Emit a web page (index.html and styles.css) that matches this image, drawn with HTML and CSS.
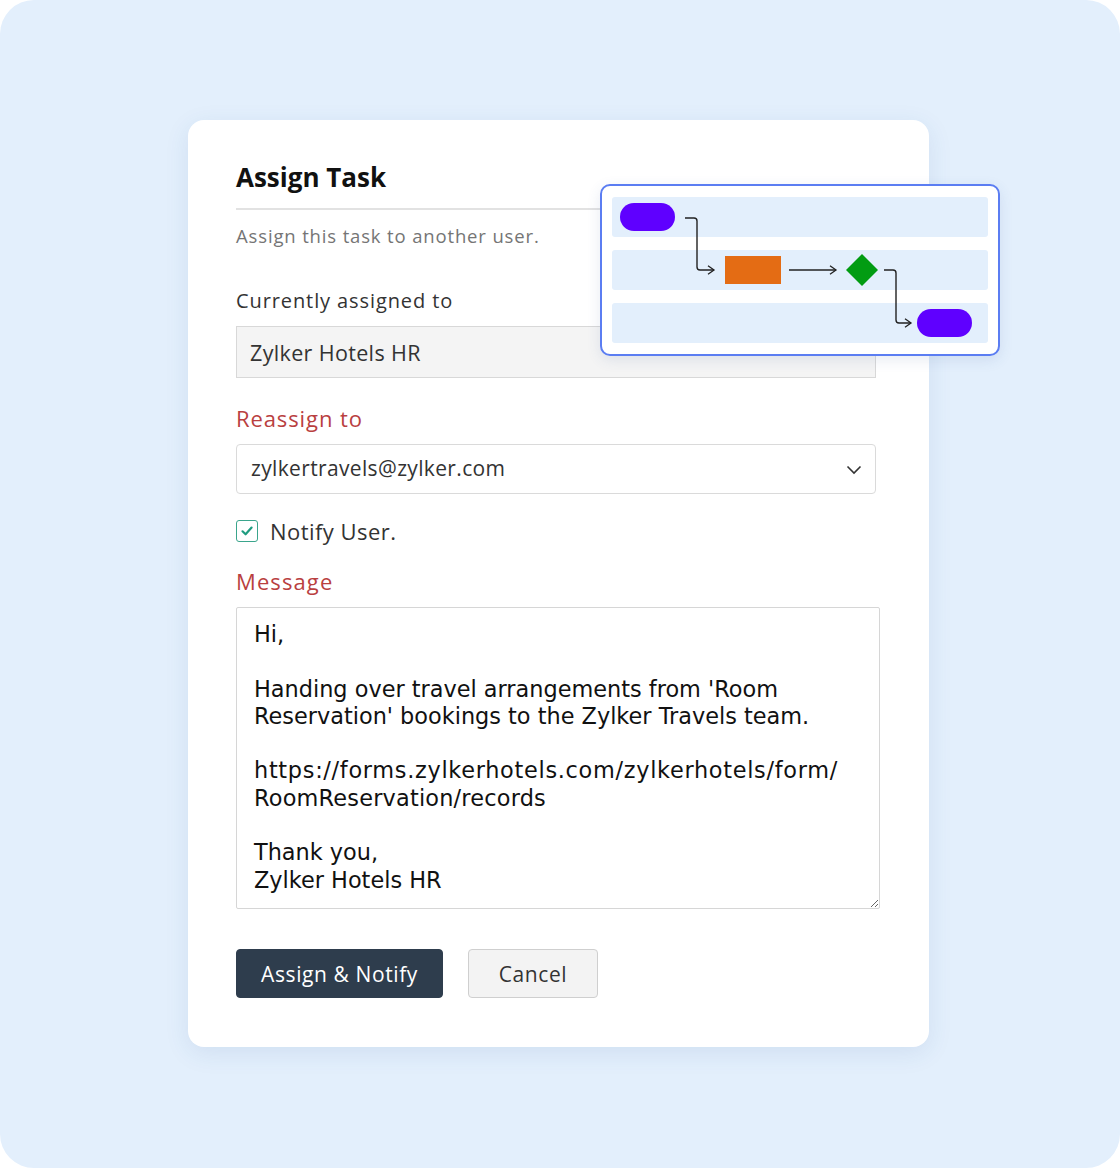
FILE: index.html
```html
<!DOCTYPE html>
<html lang="en">
<head>
<meta charset="utf-8">
<title>Assign Task</title>
<link rel="stylesheet" href="styles.css">
</head>
<body>
<div class="stage">
  <div class="card">
    <h1 class="title">Assign Task</h1>
    <p class="subtitle">Assign this task to another user.</p>

    <div class="label">Currently assigned to</div>
    <div class="field field-readonly">Zylker Hotels HR</div>

    <div class="label label-red">Reassign to</div>
    <div class="field field-select">
      <span>zylkertravels@zylker.com</span>
      <svg class="chev" width="16" height="10" viewBox="0 0 16 10"><path d="M1.5 1.5 L8 8 L14.5 1.5" fill="none" stroke="#333" stroke-width="1.6"/></svg>
    </div>

    <label class="check-row">
      <span class="checkbox">
        <svg width="16" height="16" viewBox="0 0 16 16"><path d="M3.5 8.3 L6.6 11.3 L12.6 4.6" fill="none" stroke="#1f9c80" stroke-width="2.2" stroke-linecap="round" stroke-linejoin="round"/></svg>
      </span>
      <span>Notify User.</span>
    </label>

    <div class="label label-red msg-label">Message</div>
    <div class="message" role="textbox" aria-multiline="true">Hi,

Handing over travel arrangements from 'Room
Reservation' bookings to the Zylker Travels team.

<span class="url">https://forms.zylkerhotels.com/zylkerhotels/form/</span>
<span class="url2">RoomReservation/records</span>

Thank you,
Zylker Hotels HR</div>

    <div class="actions">
      <button class="btn btn-primary">Assign &amp; Notify</button>
      <button class="btn btn-secondary">Cancel</button>
    </div>

    <div class="flow">
      <div class="lane"></div>
      <div class="lane"></div>
      <div class="lane"></div>
      <svg class="flow-svg" width="396" height="168" viewBox="0 0 396 168">
        <defs>
          <marker id="ah" markerWidth="10" markerHeight="10" refX="8" refY="5" orient="auto" markerUnits="userSpaceOnUse">
            <path d="M2 0.8 L8 5 L2 9.2" fill="none" stroke="#222" stroke-width="1.3"/>
          </marker>
        </defs>
        <rect x="18" y="17" width="55" height="28" rx="14" fill="#5f00ff"/>
        <path d="M83 32 H92 Q95 32 95 35 V81 Q95 84 98 84 H112" fill="none" stroke="#222" stroke-width="1.4" marker-end="url(#ah)"/>
        <rect x="123" y="70" width="56" height="28" fill="#e46c14"/>
        <path d="M187 84 H234" fill="none" stroke="#222" stroke-width="1.4" marker-end="url(#ah)"/>
        <path d="M260 68 L276 84 L260 100 L244 84 Z" fill="#029c12"/>
        <path d="M282 84 H291 Q294 84 294 87 V134 Q294 137 297 137 H309" fill="none" stroke="#222" stroke-width="1.4" marker-end="url(#ah)"/>
        <rect x="315" y="123" width="55" height="28" rx="14" fill="#5f00ff"/>
      </svg>
    </div>
  </div>
</div>
</body>
</html>
```

FILE: styles.css
```css
* { box-sizing: border-box; }

html, body {
  margin: 0;
  padding: 0;
  background: #ffffff;
}

body {
  font-family: "Open Sans", Lato, "Liberation Sans", sans-serif;
  color: #333;
}

.stage {
  width: 1120px;
  height: 1168px;
  background: #e3effc;
  border-radius: 34px;
  padding: 120px 0 0 188px;
}

.card {
  position: relative;
  width: 741px;
  height: 927px;
  background: #fff;
  border-radius: 16px;
  box-shadow: 0 6px 24px rgba(40, 90, 150, 0.10);
  padding: 42px 48px 0 48px;
  display: flex;
  flex-direction: column;
}

.title {
  margin: 0;
  font-size: 26px;
  line-height: 30px;
  font-weight: 700;
  color: #111;
  padding-bottom: 16px;
  border-bottom: 2px solid #e2e2e2;
  width: 645px;
}

.subtitle {
  margin: 14px 0 0 0;
  font-size: 18.5px;
  letter-spacing: 0.85px;
  line-height: 24px;
  color: #757575;
}

.label {
  font-size: 20px;
  letter-spacing: 0.9px;
  line-height: 24px;
  color: #333;
  margin-top: 41px;
}

.label-red {
  color: #b9403f;
  font-size: 22px;
  letter-spacing: 0.9px;
  line-height: 26px;
  margin-top: 27px;
}

.msg-label {
  margin-top: 25px;
  letter-spacing: 1.1px;
}

.field {
  margin-top: 13px;
  width: 640px;
  border: 1px solid #dadada;
  color: #333;
  display: flex;
  align-items: center;
}

.field-readonly {
  height: 52px;
  background: #f4f4f4;
  padding-left: 13px;
  border-color: #d8d8d8;
  font-size: 21.5px;
  letter-spacing: 0.35px;
}

.field-select {
  height: 50px;
  background: #fff;
  border-radius: 4px;
  padding: 0 13px 0 14px;
  justify-content: space-between;
  padding-bottom: 2px;
  font-size: 21px;
  letter-spacing: 0.35px;
}

.chev { margin-top: 4px; }

.check-row {
  margin-top: 25px;
  display: flex;
  align-items: center;
  gap: 12px;
  font-size: 22px;
  letter-spacing: 0.45px;
  line-height: 24px;
  color: #333;
}

.checkbox {
  width: 22px;
  height: 22px;
  border: 1.6px solid #3aa58c;
  border-radius: 3px;
  display: flex;
  align-items: center;
  justify-content: center;
}

.message {
  margin-top: 13px;
  width: 644px;
  height: 302px;
  flex-shrink: 0;
  border: 1px solid #d6d6d6;
  border-radius: 2px;
  padding: 13px 17px 0 17px;
  font-family: "DejaVu Sans", Verdana, sans-serif;
  font-size: 22.4px;
  line-height: 27.3px;
  color: #111;
  resize: both;
  overflow: hidden;
  white-space: pre;
  background: #fff;
}

.url { letter-spacing: 0.7px; }
.url2 { letter-spacing: 0.2px; }

.actions {
  margin-top: 40px;
  display: flex;
  gap: 25px;
}

.btn {
  height: 49px;
  font-family: "Open Sans", Lato, "Liberation Sans", sans-serif;
  font-size: 21px;
  letter-spacing: 0.6px;
  border-radius: 4px;
  cursor: pointer;
}

.btn-primary {
  width: 207px;
  background: #2e3d4d;
  color: #fff;
  border: 1px solid #2e3d4d;
}

.btn-secondary {
  width: 130px;
  background: #f3f3f3;
  color: #333;
  border: 1.5px solid #cfcfcf;
}

.flow {
  position: absolute;
  left: 412px;
  top: 64px;
  width: 400px;
  height: 172px;
  background: #fff;
  border: 2px solid #5b7df2;
  border-radius: 10px;
  box-shadow: 0 4px 14px rgba(60, 90, 160, 0.12);
  padding: 11px 10px 0 10px;
  display: flex;
  flex-direction: column;
  gap: 13px;
}

.lane {
  height: 40px;
  background: #e3effc;
  border-radius: 3px;
}

.flow-svg {
  position: absolute;
  left: 0;
  top: 0;
}
```
